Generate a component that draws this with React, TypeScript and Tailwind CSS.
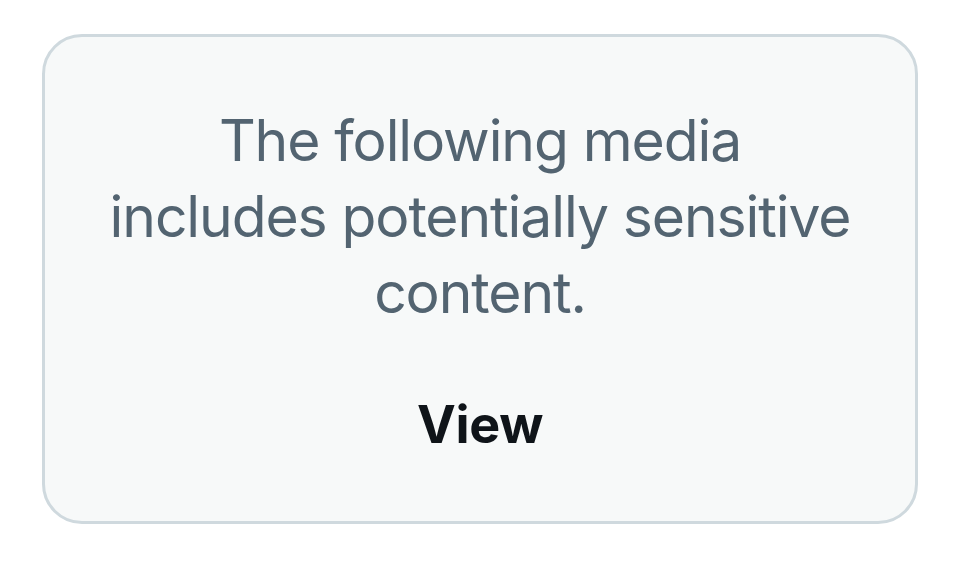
export default function App() {
  return (
    <div className="min-h-screen bg-white pt-[34px] pl-[42px]" style={{ fontFamily: 'Inter, "Noto Sans", sans-serif' }}>
      <div className="w-[876px] h-[490px] rounded-[40px] border-[3px] border-[#cfd9de] bg-[#f7f9f9] flex flex-col items-center px-[40px] pt-[66px]">
        <p className="text-[57px] leading-[76px] tracking-[-1.1px] text-[#536471] text-center whitespace-nowrap">
          The following media
          <br />
          includes potentially sensitive
          <br />
          content.
        </p>
        <button className="mt-[64px] text-[52px] leading-[60px] font-bold tracking-[-0.3px] text-[#0f1419]">View</button>
      </div>
    </div>
  )
}
